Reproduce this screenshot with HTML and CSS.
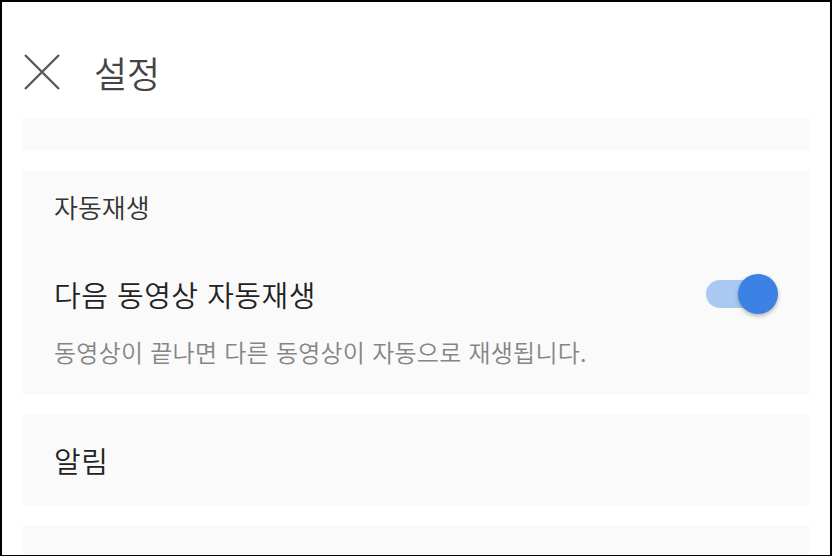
FILE: index.html
```html
<!DOCTYPE html>
<html lang="ko">
<head>
<meta charset="utf-8">
<title>설정</title>
<link rel="stylesheet" href="styles.css">
</head>
<body>
<div class="frame">
  <header class="header">
    <button class="close" aria-label="닫기">
      <svg width="36" height="36" viewBox="0 0 36 36"><path d="M1 1L35 35M35 1L1 35" stroke="#595959" stroke-width="2.4" fill="none"/></svg>
    </button>
    <h1 class="title">설정</h1>
  </header>
  <main class="scroll">
    <div class="list">
      <section class="card card-simple card-first">
        <div class="item-title">일반 설정</div>
      </section>
      <section class="card card-group">
        <div class="group-title">자동재생</div>
        <div class="row">
          <div class="row-text">
            <div class="item-title">다음 동영상 자동재생</div>
            <div class="item-desc">동영상이 끝나면 다른 동영상이 자동으로 재생됩니다.</div>
          </div>
          <div class="switch on" role="switch" aria-checked="true">
            <span class="track"></span>
            <span class="thumb"></span>
          </div>
        </div>
      </section>
      <section class="card card-simple">
        <div class="item-title">알림</div>
      </section>
      <section class="card card-simple">
        <div class="item-title">기록</div>
      </section>
    </div>
  </main>
</div>
</body>
</html>
```
FILE: styles.css
```css
* { box-sizing: border-box; }
html, body { margin: 0; padding: 0; background: #fff; }
body { font-family: "Noto Sans CJK KR", "Noto Sans", sans-serif; font-weight: 350; }
.frame {
  width: 832px;
  height: 556px;
  border: 2px solid #000;
  border-bottom-width: 1px;
  display: flex;
  flex-direction: column;
  overflow: hidden;
  background: #fff;
}
.header {
  height: 116px;
  flex: none;
  display: flex;
  align-items: center;
  padding: 24px 0 0 22px;
  background: #fff;
  position: relative;
  z-index: 1;
}
.close {
  width: 36px;
  height: 36px;
  padding: 0;
  border: 0;
  background: none;
  display: block;
}
.close svg { display: block; }
.title {
  margin: 0 0 0 34px;
  font-size: 36px;
  font-weight: 350;
  color: #444;
  line-height: 40px;
}
.scroll {
  flex: 1;
  overflow: hidden;
  padding: 0 20px;
}
.list {
  display: flex;
  flex-direction: column;
  gap: 20px;
}
.card {
  background: #fafafa;
  flex: none;
}
.card-first { margin-top: -57px; padding-bottom: 6px; }
.card-simple {
  height: 90px;
  display: flex;
  align-items: center;
  padding-left: 32px;
  padding-right: 32px;
}
.card-group {
  padding: 19px 32px 27px;
}
.group-title {
  font-size: 26px;
  line-height: 34px;
  color: #333;
}
.item-title {
  font-size: 29px;
  line-height: 40px;
  letter-spacing: 0.5px;
  color: #222;
}
.row {
  display: flex;
  justify-content: space-between;
  align-items: flex-start;
  margin-top: 50px;
}
.item-desc {
  margin-top: 22px;
  font-size: 24px;
  line-height: 32px;
  letter-spacing: 0.25px;
  color: #858585;
}
.switch {
  position: relative;
  width: 72px;
  height: 40px;
  flex: none;
}
.track {
  position: absolute;
  left: 0;
  top: 6px;
  width: 66px;
  height: 28px;
  border-radius: 14px;
  background: #aac9f2;
}
.thumb {
  position: absolute;
  right: 0;
  top: 0;
  width: 40px;
  height: 40px;
  border-radius: 50%;
  background: #3b82e4;
  box-shadow: 0 2px 4px rgba(0,0,0,0.28);
}
```
